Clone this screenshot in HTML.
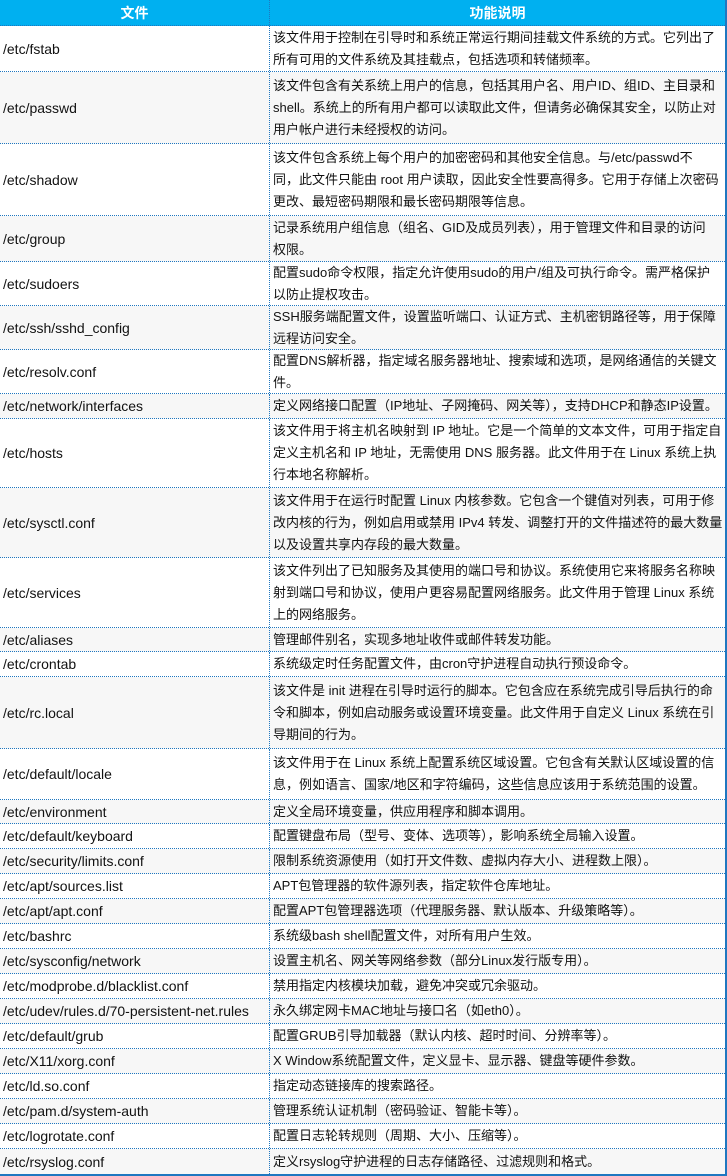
<!DOCTYPE html>
<html><head><meta charset="utf-8"><style>
*{margin:0;padding:0;box-sizing:border-box}
body{width:727px;height:1176px;background:#fff;font-family:"Liberation Sans","Noto Sans CJK SC",sans-serif;font-size:13px;color:#111;overflow:hidden}
.t{position:absolute;left:0;top:0;width:727px;border-right:2px solid #1f77c0;border-bottom:2px solid #1f77c0}
.r{display:flex;border-bottom:1px dotted #1f77c0;}
.r:nth-child(odd){background:#f7f7f7}
.r:nth-child(2n){background:#fff}
.a{width:270px;border-right:1px dotted #1f77c0;display:flex;align-items:center;padding-left:3px;white-space:nowrap;font-size:14px}
.b{flex:1;display:flex;align-items:center;padding-left:3px;line-height:22px;white-space:nowrap}
.h{background:#00b0f0!important;color:#fff;font-weight:bold;font-size:14px}
.h .a,.h .b{justify-content:center;padding:0}
</style></head><body><div class="t">
<div class="r h" style="height:26px"><div class="a">文件</div><div class="b">功能说明</div></div>
<div class="r" style="height:46px"><div class="a">/etc/fstab</div><div class="b">该文件用于控制在引导时和系统正常运行期间挂载文件系统的方式。它列出了<br>所有可用的文件系统及其挂载点，包括选项和转储频率。</div></div>
<div class="r" style="height:72px"><div class="a">/etc/passwd</div><div class="b">该文件包含有关系统上用户的信息，包括其用户名、用户ID、组ID、主目录和<br>shell。系统上的所有用户都可以读取此文件，但请务必确保其安全，以防止对<br>用户帐户进行未经授权的访问。</div></div>
<div class="r" style="height:72px"><div class="a">/etc/shadow</div><div class="b">该文件包含系统上每个用户的加密密码和其他安全信息。与/etc/passwd不<br>同，此文件只能由 root 用户读取，因此安全性要高得多。它用于存储上次密码<br>更改、最短密码期限和最长密码期限等信息。</div></div>
<div class="r" style="height:46px"><div class="a">/etc/group</div><div class="b">记录系统用户组信息（组名、GID及成员列表），用于管理文件和目录的访问<br>权限。</div></div>
<div class="r" style="height:44px"><div class="a">/etc/sudoers</div><div class="b">配置sudo命令权限，指定允许使用sudo的用户/组及可执行命令。需严格保护<br>以防止提权攻击。</div></div>
<div class="r" style="height:44px"><div class="a">/etc/ssh/sshd_config</div><div class="b">SSH服务端配置文件，设置监听端口、认证方式、主机密钥路径等，用于保障<br>远程访问安全。</div></div>
<div class="r" style="height:44px"><div class="a">/etc/resolv.conf</div><div class="b">配置DNS解析器，指定域名服务器地址、搜索域和选项，是网络通信的关键文<br>件。</div></div>
<div class="r" style="height:25px"><div class="a">/etc/network/interfaces</div><div class="b">定义网络接口配置（IP地址、子网掩码、网关等），支持DHCP和静态IP设置。</div></div>
<div class="r" style="height:69px"><div class="a">/etc/hosts</div><div class="b">该文件用于将主机名映射到 IP 地址。它是一个简单的文本文件，可用于指定自<br>定义主机名和 IP 地址，无需使用 DNS 服务器。此文件用于在 Linux 系统上执<br>行本地名称解析。</div></div>
<div class="r" style="height:70px"><div class="a">/etc/sysctl.conf</div><div class="b">该文件用于在运行时配置 Linux 内核参数。它包含一个键值对列表，可用于修<br>改内核的行为，例如启用或禁用 IPv4 转发、调整打开的文件描述符的最大数量<br>以及设置共享内存段的最大数量。</div></div>
<div class="r" style="height:70px"><div class="a">/etc/services</div><div class="b">该文件列出了已知服务及其使用的端口号和协议。系统使用它来将服务名称映<br>射到端口号和协议，使用户更容易配置网络服务。此文件用于管理 Linux 系统<br>上的网络服务。</div></div>
<div class="r" style="height:24px"><div class="a">/etc/aliases</div><div class="b">管理邮件别名，实现多地址收件或邮件转发功能。</div></div>
<div class="r" style="height:25px"><div class="a">/etc/crontab</div><div class="b">系统级定时任务配置文件，由cron守护进程自动执行预设命令。</div></div>
<div class="r" style="height:72px"><div class="a">/etc/rc.local</div><div class="b">该文件是 init 进程在引导时运行的脚本。它包含应在系统完成引导后执行的命<br>令和脚本，例如启动服务或设置环境变量。此文件用于自定义 Linux 系统在引<br>导期间的行为。</div></div>
<div class="r" style="height:51px"><div class="a">/etc/default/locale</div><div class="b">该文件用于在 Linux 系统上配置系统区域设置。它包含有关默认区域设置的信<br>息，例如语言、国家/地区和字符编码，这些信息应该用于系统范围的设置。</div></div>
<div class="r" style="height:24px"><div class="a">/etc/environment</div><div class="b">定义全局环境变量，供应用程序和脚本调用。</div></div>
<div class="r" style="height:25px"><div class="a">/etc/default/keyboard</div><div class="b">配置键盘布局（型号、变体、选项等），影响系统全局输入设置。</div></div>
<div class="r" style="height:25px"><div class="a">/etc/security/limits.conf</div><div class="b">限制系统资源使用（如打开文件数、虚拟内存大小、进程数上限）。</div></div>
<div class="r" style="height:25px"><div class="a">/etc/apt/sources.list</div><div class="b">APT包管理器的软件源列表，指定软件仓库地址。</div></div>
<div class="r" style="height:25px"><div class="a">/etc/apt/apt.conf</div><div class="b">配置APT包管理器选项（代理服务器、默认版本、升级策略等）。</div></div>
<div class="r" style="height:25px"><div class="a">/etc/bashrc</div><div class="b">系统级bash shell配置文件，对所有用户生效。</div></div>
<div class="r" style="height:25px"><div class="a">/etc/sysconfig/network</div><div class="b">设置主机名、网关等网络参数（部分Linux发行版专用）。</div></div>
<div class="r" style="height:25px"><div class="a">/etc/modprobe.d/blacklist.conf</div><div class="b">禁用指定内核模块加载，避免冲突或冗余驱动。</div></div>
<div class="r" style="height:25px"><div class="a">/etc/udev/rules.d/70-persistent-net.rules</div><div class="b">永久绑定网卡MAC地址与接口名（如eth0）。</div></div>
<div class="r" style="height:25px"><div class="a">/etc/default/grub</div><div class="b">配置GRUB引导加载器（默认内核、超时时间、分辨率等）。</div></div>
<div class="r" style="height:25px"><div class="a">/etc/X11/xorg.conf</div><div class="b">X Window系统配置文件，定义显卡、显示器、键盘等硬件参数。</div></div>
<div class="r" style="height:25px"><div class="a">/etc/ld.so.conf</div><div class="b">指定动态链接库的搜索路径。</div></div>
<div class="r" style="height:25px"><div class="a">/etc/pam.d/system-auth</div><div class="b">管理系统认证机制（密码验证、智能卡等）。</div></div>
<div class="r" style="height:25px"><div class="a">/etc/logrotate.conf</div><div class="b">配置日志轮转规则（周期、大小、压缩等）。</div></div>
<div class="r" style="height:25px;border-bottom:none"><div class="a">/etc/rsyslog.conf</div><div class="b">定义rsyslog守护进程的日志存储路径、过滤规则和格式。</div></div>
</div></body></html>
